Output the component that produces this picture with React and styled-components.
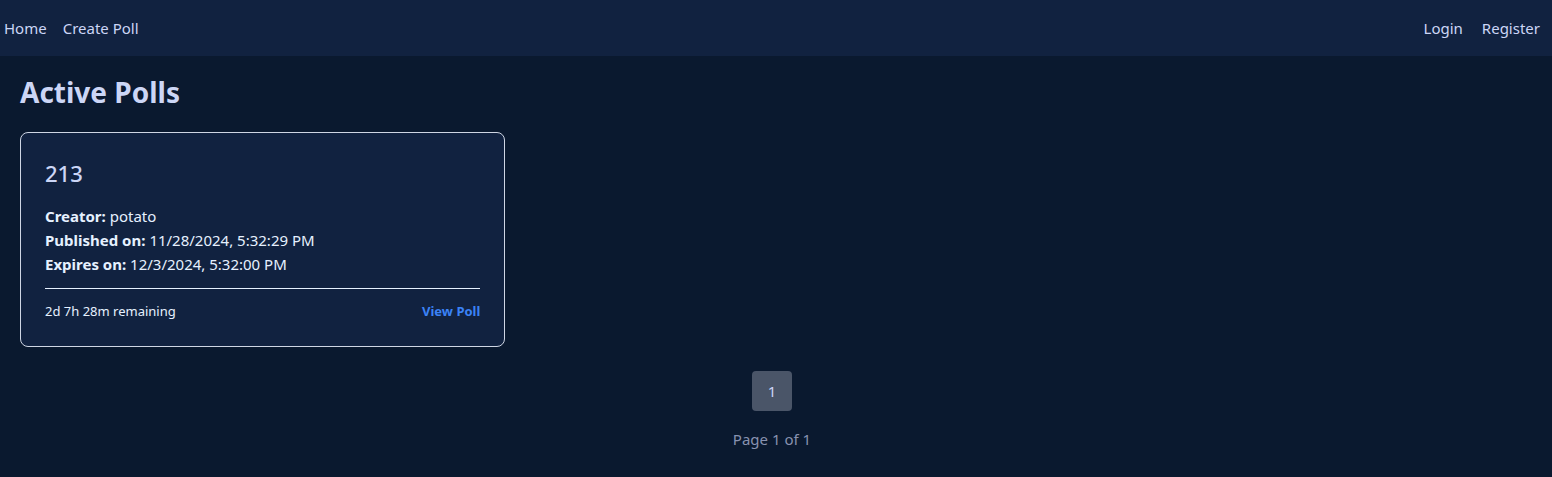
import React from "react";
import styled, { createGlobalStyle } from "styled-components";

const COLORS = {
  page: "#0a192f",
  nav: "#112240",
  card: "#112240",
  heading: "#ccd6f6",
  text: "#e6f1ff",
  muted: "#8892b0",
  link: "#3b82f6",
  pageBtn: "#4a5568",
};

const GlobalStyle = createGlobalStyle`
  html, body {
    margin: 0;
    padding: 0;
    background: ${COLORS.page};
    font-family: "Noto Sans", "Open Sans", sans-serif;
  }
  * { box-sizing: border-box; }
`;

const polls = [
  {
    id: 1,
    title: "213",
    creator: "potato",
    published: "11/28/2024, 5:32:29 PM",
    expires: "12/3/2024, 5:32:00 PM",
    remaining: "2d 7h 28m remaining",
  },
];

const App = () => {
  return (
    <>
      <GlobalStyle />
      <Nav>
        <NavGroup>
          <NavLink href="#">Home</NavLink>
          <NavLink href="#">Create Poll</NavLink>
        </NavGroup>
        <NavGroup $wide>
          <NavLink href="#">Login</NavLink>
          <NavLink href="#">Register</NavLink>
        </NavGroup>
      </Nav>
      <Main>
        <Title>Active Polls</Title>
        <Grid>
          {polls.map((poll) => (
            <Card key={poll.id}>
              <CardTitle>{poll.title}</CardTitle>
              <Info>
                <InfoRow>
                  <strong>Creator:</strong> {poll.creator}
                </InfoRow>
                <InfoRow>
                  <strong>Published on:</strong> {poll.published}
                </InfoRow>
                <InfoRow>
                  <strong>Expires on:</strong> {poll.expires}
                </InfoRow>
              </Info>
              <CardFooter>
                <Remaining>{poll.remaining}</Remaining>
                <ViewLink href="#">View Poll</ViewLink>
              </CardFooter>
            </Card>
          ))}
        </Grid>
        <Pagination>
          <PageButton>1</PageButton>
          <PageInfo>Page 1 of 1</PageInfo>
        </Pagination>
      </Main>
    </>
  );
};

const Nav = styled.nav`
  display: flex;
  justify-content: space-between;
  align-items: center;
  height: 56px;
  padding: 0 12px 0 4px;
  background: ${COLORS.nav};
`;

const NavGroup = styled.div`
  display: flex;
  gap: ${(p) => (p.$wide ? "19px" : "16px")};
`;

const NavLink = styled.a`
  color: ${COLORS.heading};
  text-decoration: none;
  font-size: 15px;
`;

const Main = styled.main`
  padding: 20px 20px 30px;
`;

const Title = styled.h1`
  margin: 0 0 24px;
  font-size: 28px;
  line-height: 32px;
  font-weight: 700;
  color: ${COLORS.heading};
`;

const Grid = styled.div`
  display: grid;
  grid-template-columns: repeat(3, 1fr);
  gap: 28px;
`;

const Card = styled.div`
  background: ${COLORS.card};
  border: 1px solid #cfd6e4;
  border-radius: 8px;
  padding: 25px 24px 26px;
`;

const CardTitle = styled.h2`
  margin: 0 0 16px;
  font-size: 22px;
  line-height: 30px;
  font-weight: 500;
  color: ${COLORS.heading};
`;

const Info = styled.div`
  padding-bottom: 12px;
  border-bottom: 1px solid #e6f1ff;
`;

const InfoRow = styled.p`
  margin: 0;
  font-size: 15px;
  line-height: 24px;
  color: ${COLORS.text};

  strong {
    font-weight: 700;
  }
`;

const CardFooter = styled.div`
  display: flex;
  justify-content: space-between;
  align-items: center;
  margin-top: 13px;
`;

const Remaining = styled.span`
  font-size: 13px;
  color: ${COLORS.text};
`;

const ViewLink = styled.a`
  font-size: 13px;
  font-weight: 700;
  color: ${COLORS.link};
  text-decoration: none;
`;

const Pagination = styled.div`
  display: flex;
  flex-direction: column;
  align-items: center;
  gap: 18px;
  margin-top: 24px;
  padding-right: 8px;
`;

const PageButton = styled.button`
  width: 40px;
  height: 40px;
  border: none;
  border-radius: 4px;
  background: ${COLORS.pageBtn};
  color: ${COLORS.heading};
  font-family: inherit;
  font-size: 15px;
`;

const PageInfo = styled.span`
  font-size: 15px;
  color: ${COLORS.muted};
`;

export default App;
